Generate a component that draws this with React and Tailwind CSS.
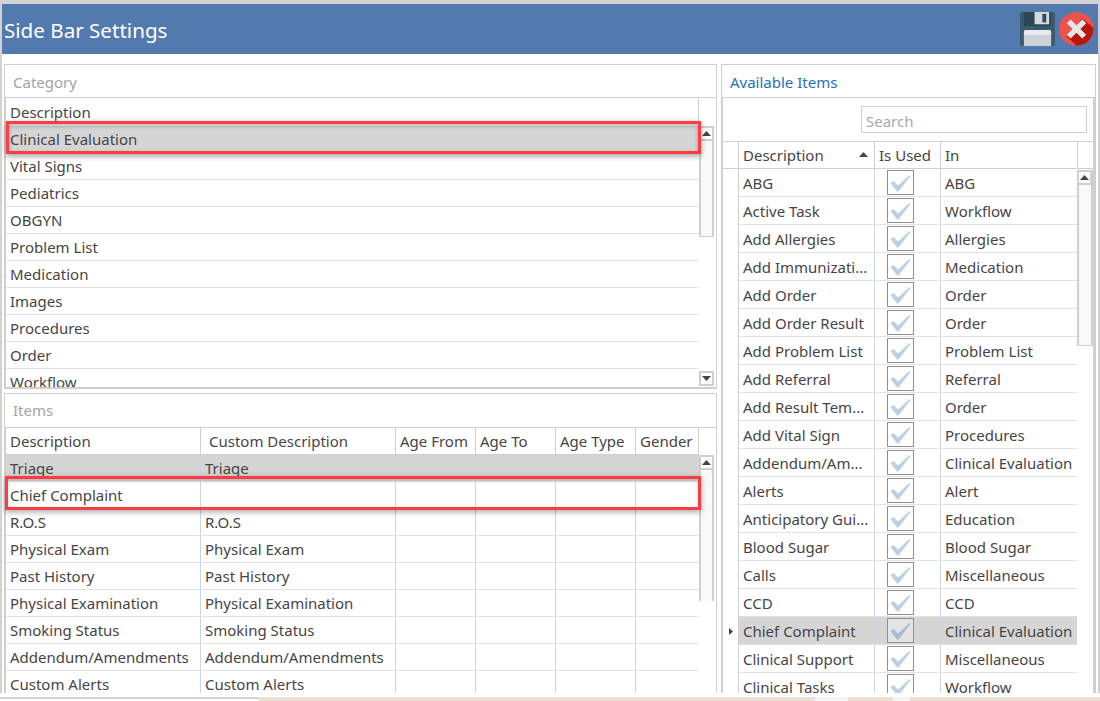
const font = { fontFamily: '"Noto Sans", "Open Sans", sans-serif' };

const categories = ["Clinical Evaluation", "Vital Signs", "Pediatrics", "OBGYN", "Problem List", "Medication", "Images", "Procedures", "Order", "Workflow"];

const items = [
  ["Triage", "Triage"],
  ["Chief Complaint", ""],
  ["R.O.S", "R.O.S"],
  ["Physical Exam", "Physical Exam"],
  ["Past History", "Past History"],
  ["Physical Examination", "Physical Examination"],
  ["Smoking Status", "Smoking Status"],
  ["Addendum/Amendments", "Addendum/Amendments"],
  ["Custom Alerts", "Custom Alerts"],
];

const available = [
  ["ABG", "ABG"],
  ["Active Task", "Workflow"],
  ["Add Allergies", "Allergies"],
  ["Add Immunizati...", "Medication"],
  ["Add Order", "Order"],
  ["Add Order Result", "Order"],
  ["Add Problem List", "Problem List"],
  ["Add Referral", "Referral"],
  ["Add Result Tem...", "Order"],
  ["Add Vital Sign", "Procedures"],
  ["Addendum/Am...", "Clinical Evaluation"],
  ["Alerts", "Alert"],
  ["Anticipatory Gui...", "Education"],
  ["Blood Sugar", "Blood Sugar"],
  ["Calls", "Miscellaneous"],
  ["CCD", "CCD"],
  ["Chief Complaint", "Clinical Evaluation"],
  ["Clinical Support", "Miscellaneous"],
  ["Clinical Tasks", "Workflow"],
];

function Arrow({ down }) {
  return (
    <svg width="9" height="5" viewBox="0 0 9 5" className="block">
      <path d={down ? "M0 0H9L4.5 5Z" : "M0 5H9L4.5 0Z"} fill="#444444" />
    </svg>
  );
}

function ScrollBtn({ down }) {
  return (
    <div className="flex h-[15px] w-[15px] shrink-0 items-center justify-center border-2 border-[#cfcfcf] bg-white">
      <Arrow down={down} />
    </div>
  );
}

function Check({ selected }) {
  return (
    <div className={`flex h-[25px] w-[27px] items-center justify-center border border-[#8f8f8f] ${selected ? "bg-[#e4e4e4]" : "bg-white"}`}>
      <svg width="21" height="18" viewBox="0 0 21 18">
        <path d="M0.5 9L3.5 7L8 11.5L19.5 1L20.5 2L8.5 17.5H7Z" fill={selected ? "#a7bbd2" : "#bccfe5"} />
      </svg>
    </div>
  );
}

function Save() {
  return (
    <svg width="35" height="34" viewBox="0 0 36 36" preserveAspectRatio="none" className="block">
      <path d="M2 0H34a2 2 0 0 1 2 2V34a2 2 0 0 1-2 2H2a2 2 0 0 1-2-2V2a2 2 0 0 1 2-2Z" fill="#3a5a70" />
      <rect x="4" y="0" width="28" height="15" fill="#2d4657" />
      <rect x="15" y="0" width="15" height="13" fill="#d5dadd" />
      <rect x="23" y="2" width="4" height="9" fill="#2f4a5f" />
      <path d="M4 21a2 2 0 0 1 2-2H30a2 2 0 0 1 2 2V36H4Z" fill="#ccd1d5" />
      <path d="M4 24V21a2 2 0 0 1 2-2H30a2 2 0 0 1 2 2V24Z" fill="#e8ebed" />
    </svg>
  );
}

function Close() {
  return (
    <svg width="35" height="34" viewBox="0 0 36 36" preserveAspectRatio="none" className="block">
      <circle cx="18" cy="18" r="17.8" fill="#f1514d" />
      <path d="M24 7L35.4 17A17.8 17.8 0 0 1 18 35.8L8 26Z" fill="#b5160f" />
      <path d="M12 8L18 14L24 8L28 12L22 18L28 24L24 28L18 22L12 28L8 24L14 18L8 12Z" fill="#e4e7ea" />
    </svg>
  );
}

function Th({ className = "", children }) {
  return (
    <div className={`flex h-full shrink-0 items-center overflow-hidden border-r border-[#cfcfcf] whitespace-nowrap ${className}`}>
      {children}
    </div>
  );
}

function ItemCell({ w, children }) {
  return (
    <div className={`flex h-full shrink-0 items-center overflow-hidden border-r border-[#c8d5e5] pl-[4px] whitespace-nowrap ${w}`}>
      <span>{children}</span>
    </div>
  );
}

export default function App() {
  return (
    <div className="flex h-[701px] w-[1100px] flex-col overflow-hidden bg-white text-[15px] text-[#454545]" style={font}>
      <div className="flex h-[693px] flex-col overflow-hidden border-x-2 border-t-4 border-[#d2d2d2]">
        <div className="flex h-[50px] shrink-0 items-center justify-between bg-[#537aae] pr-[4px] pl-[2px]">
          <span className="pt-[2px] text-[20.6px] text-white">Side Bar Settings</span>
          <div className="flex items-center gap-[4px]">
            <Save />
            <Close />
          </div>
        </div>

        <div className="flex min-h-0 flex-1 gap-[4px] pt-[10px] pl-[2px]">
          <div className="relative flex w-[713px] shrink-0 flex-col gap-[4px]">
            <section className="flex h-[325px] flex-col border border-[#cfcfcf] border-b-2">
              <div className="flex h-[32px] shrink-0 items-center pt-[3px] pl-[8px] text-[#a3a3a3]">Category</div>
              <div className="flex min-h-0 flex-1 overflow-hidden border-t border-l border-[#cfcfcf]">
                <div className="min-w-0 flex-1">
                  <div className="flex h-[28px] items-center border-r border-[#cfcfcf] pl-[4px]">Description</div>
                  {categories.map((c, i) => (
                    <div
                      key={c}
                      className={`flex h-[27px] shrink-0 items-center overflow-hidden border-b border-[#e3e3e3] pl-[4px] ${i === 0 ? "bg-[#d5d5d5]" : "bg-white"}`}
                    >
                      <span>{c}</span>
                    </div>
                  ))}
                </div>
                <div className="flex w-[17px] shrink-0 flex-col pt-[28px] pr-[2px] pb-[1px]">
                  <div className="flex h-[111px] shrink-0 flex-col border-x-2 border-b border-[#cfcfcf] bg-[#f9f9f9]">
                    <div className="-mx-[2px]"><ScrollBtn /></div>
                  </div>
                  <div className="flex-1" />
                  <ScrollBtn down />
                </div>
              </div>
            </section>

            <section className="flex min-h-0 flex-1 flex-col border-x border-t border-[#cfcfcf]">
              <div className="flex h-[33px] shrink-0 items-center pl-[8px] text-[#a3a3a3]">Items</div>
              <div className="flex min-h-0 flex-1 overflow-hidden border-t border-l border-[#cfcfcf]">
                <div className="min-w-0 flex-1">
                  <div className="flex h-[27px] border-b border-[#cfcfcf]">
                    <Th className="w-[195px] pl-[4px]">Description</Th>
                    <Th className="w-[195px] pl-[8px]">Custom Description</Th>
                    <Th className="w-[80px] pl-[4px]">Age From</Th>
                    <Th className="w-[80px] pl-[4px]">Age To</Th>
                    <Th className="w-[80px] pl-[4px]">Age Type</Th>
                    <Th className="w-[63px] pl-[4px]">Gender</Th>
                  </div>
                  {items.map((r, i) => (
                    <div key={r[0]} className={`flex h-[27px] border-b border-[#e3e3e3] ${i === 0 ? "bg-[#d5d5d5]" : "bg-white"}`}>
                      <ItemCell w="w-[195px]">{r[0]}</ItemCell>
                      <ItemCell w="w-[195px]">{r[1]}</ItemCell>
                      <ItemCell w="w-[80px]" />
                      <ItemCell w="w-[80px]" />
                      <ItemCell w="w-[80px]" />
                    </div>
                  ))}
                </div>
                <div className="flex w-[17px] shrink-0 flex-col pt-[27px] pr-[2px]">
                  <div className="flex h-[146px] shrink-0 flex-col border-x-2 border-[#cfcfcf] bg-[#f9f9f9]">
                    <div className="-mx-[2px]"><ScrollBtn /></div>
                  </div>
                </div>
              </div>
            </section>

            <div className="absolute top-[57px] left-[2px] h-[33px] w-[695px] border-[3px] border-[#ff3c42] shadow-[0_2px_6px_rgba(0,0,0,0.4),inset_0_2px_4px_rgba(0,0,0,0.3)]" />
            <div className="absolute top-[412px] left-[1px] h-[34px] w-[696px] border-[3px] border-[#ff3c42] shadow-[0_2px_6px_rgba(0,0,0,0.35),inset_0_2px_4px_rgba(0,0,0,0.15)]" />
          </div>

          <section className="flex w-[375px] min-w-0 shrink-0 flex-col border-x border-t border-[#cfcfcf]">
            <div className="flex h-[32px] shrink-0 items-center pt-[2px] pl-[8px] text-[#1f6fc0]">Available Items</div>
            <div className="flex min-h-0 flex-1 flex-col border-t border-l border-r-2 border-[#cfcfcf]">
              <div className="flex h-[43px] shrink-0 items-start justify-end pt-[8px] pr-[6px]">
                <div className="flex h-[27px] w-[226px] items-center border border-[#cfcfcf] pt-[3px] pl-[4px] text-[#a8a8a8]">Search</div>
              </div>
              <div className="flex min-h-0 flex-1 flex-col overflow-hidden">
                <div className="flex h-[28px] shrink-0 border-y border-[#cfcfcf]">
                  <div className="h-full w-[16px] shrink-0 border-r border-[#cfcfcf]" />
                  <Th className="relative w-[136px] pt-[1px] pl-[4px]">
                    Description
                    <span className="absolute top-[10px] right-[6px]"><Arrow /></span>
                  </Th>
                  <Th className="w-[66px] pt-[1px] pl-[4px]">Is Used</Th>
                  <Th className="w-[137px] pt-[1px] pl-[4px]">In</Th>
                </div>
                <div className="flex min-h-0 flex-1">
                  <div className="w-[354px] min-w-0 shrink-0">
                    {available.map((r) => {
                      const sel = r[0] === "Chief Complaint";
                      return (
                        <div key={r[0]} className="flex h-[28px]">
                          <div className="flex h-full w-[16px] shrink-0 items-center justify-center border-r border-[#cfcfcf]">
                            {sel && (
                              <svg width="4" height="7" viewBox="0 0 4 7"><path d="M0 0L4 3.5L0 7Z" fill="#444444" /></svg>
                            )}
                          </div>
                          <div className={`flex h-full min-w-0 flex-1 border-b border-[#e3e3e3] ${sel ? "bg-[#d5d5d5]" : "bg-white"}`}>
                            <div className="flex h-full w-[136px] shrink-0 items-center overflow-hidden border-r border-[#c8d5e5] pt-[1px] pl-[4px] whitespace-nowrap">{r[0]}</div>
                            <div className="flex h-full w-[66px] shrink-0 items-center border-r border-[#c8d5e5] pl-[12px]"><Check selected={sel} /></div>
                            <div className="flex h-full min-w-0 flex-1 items-center overflow-hidden pt-[1px] pl-[4px] whitespace-nowrap">{r[1]}</div>
                          </div>
                        </div>
                      );
                    })}
                  </div>
                  <div className="w-[16px] shrink-0 pt-[1px]">
                    <div className="flex h-[176px] flex-col border-x-2 border-b border-[#cfcfcf] bg-[#f9f9f9]">
                      <div className="-mx-[2px]"><ScrollBtn /></div>
                    </div>
                  </div>
                </div>
              </div>
            </div>
          </section>
        </div>
      </div>

      <div className="h-[4px] shrink-0" />
      <div className="flex h-[4px] shrink-0">
        <div className="h-[2px] w-[258px] bg-[#d2d2d2]" />
        <div className="h-full w-[557px] bg-[#ecdfd3]" />
        <div className="h-full w-[33px] bg-[#f4f4f4]" />
        <div className="h-full w-[45px] bg-[#ecdfd3]" />
        <div className="h-full w-[17px] bg-[#f4f4f4]" />
        <div className="h-full flex-1 bg-[#ecdfd3]" />
      </div>
    </div>
  );
}
